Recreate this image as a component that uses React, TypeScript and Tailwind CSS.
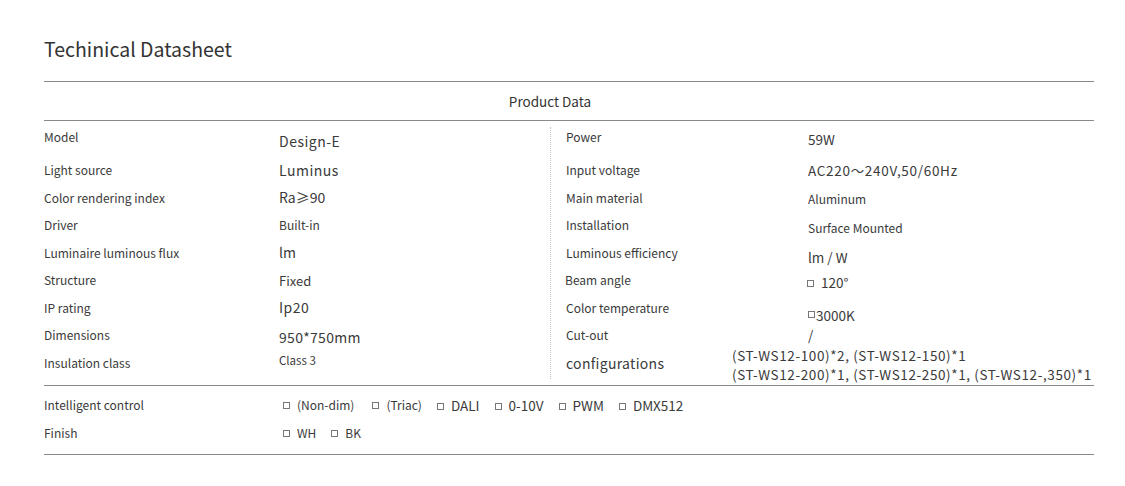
import React from "react";

const font = { fontFamily: '"Noto Sans CJK SC", "Noto Sans", sans-serif' };

function Box() {
  return <span className="inline-block w-[7px] h-[7px] border border-[#777] mr-[7px] translate-y-[-1px]" />;
}

type Row = { label: string; value: React.ReactNode; lcls?: string; vcls?: string };

const left: Row[] = [
  { label: "Model", value: "Design-E", vcls: "text-[14px] mt-[10px] tracking-[0.5px]" },
  { label: "Light source", value: "Luminus", vcls: "text-[14px] tracking-[0.5px]" },
  { label: "Color rendering index", value: "Ra≥90", vcls: "text-[14px]" },
  { label: "Driver", value: "Built-in", vcls: "text-[12px]" },
  { label: "Luminaire luminous flux", value: "lm", lcls: "text-[11.5px]", vcls: "text-[14px]" },
  { label: "Structure", value: "Fixed", vcls: "text-[13px]" },
  { label: "IP  rating", value: "Ip20", vcls: "text-[14px] tracking-[0.5px]" },
  { label: "Dimensions", value: "950*750mm", vcls: "text-[14px] mt-[4px] tracking-[0.3px]" },
  { label: "Insulation class", value: "Class 3", vcls: "text-[11.5px] mt-[-4px]" },
];

const right: Row[] = [
  { label: "Power", value: "59W", vcls: "text-[13.5px] mt-[4px]" },
  { label: "Input voltage", value: "AC220～240V,50/60Hz", vcls: "text-[13.5px] tracking-[0.7px]" },
  { label: "Main material", value: "Aluminum", vcls: "text-[12px] mt-[2px]" },
  { label: "Installation", value: "Surface Mounted", vcls: "text-[12px] mt-[6px]" },
  { label: "Luminous efficiency", value: "lm / W", vcls: "text-[13.5px] mt-[8px]" },
  { label: "Beam angle", value: (<span><Box />120°</span>), lcls: "ml-[-1px]", vcls: "text-[13.5px] mt-[4px]" },
  { label: "Color temperature", value: (<span className="inline-flex items-center"><span className="inline-block w-[7px] h-[7px] border border-[#777] mr-[1px]" />3000K</span>), vcls: "text-[13.5px] mt-[12px]" },
  { label: "Cut-out", value: "/", vcls: "text-[13.5px]" },
];

function RowView({ r, vw }: { r: Row; vw: string }) {
  return (
    <div className="h-[27.5px] flex items-center">
      <div className={`${vw} shrink-0 text-[12px] ${r.lcls ?? ""}`}>{r.label}</div>
      <div className={`${r.vcls ?? ""}`}>{r.value}</div>
    </div>
  );
}

export default function App() {
  return (
    <div className="w-[1125px] h-[486px] bg-white text-[#3a3a3a] pl-[44px] pt-[36px]" style={font}>
      <div className="w-[1050px]">
        <div className="text-[19.5px] text-[#333] leading-[26px] h-[26px]">Techinical Datasheet</div>
        <div className="mt-[19px] border-t border-[#8a8a8a]" />
        <div className="h-[38px] pr-[38px] flex items-center justify-center text-[13.5px] text-[#333]">Product Data</div>
        <div className="border-t border-[#8a8a8a]" />
        <div className="flex h-[264px]">
          <div className="w-[506px] pt-[2px]">
            <RowView r={left[0]} vw="w-[235px]" />
            <div className="mt-[6px]">
              {left.slice(1).map((r) => (
                <RowView key={r.label} r={r} vw="w-[235px]" />
              ))}
            </div>
          </div>
          <div className="border-l border-dotted border-[#c4c4c4] my-[6px]" />
          <div className="flex-1 pl-[15px] pt-[2px]">
            <RowView r={right[0]} vw="w-[242px]" />
            <div className="mt-[6px]">
              {right.slice(1).map((r) => (
                <RowView key={r.label} r={r} vw="w-[242px]" />
              ))}
              <div className="h-[27.5px] flex items-center">
                <div className="w-[166px] shrink-0 text-[14px] tracking-[0.3px] mt-[2px]">configurations</div>
                <div className="text-[13.5px] tracking-[0.6px] leading-[19px] mt-[4px] whitespace-nowrap">
                  <div>(ST-WS12-100)*2, (ST-WS12-150)*1</div>
                  <div>(ST-WS12-200)*1, (ST-WS12-250)*1, (ST-WS12-,350)*1</div>
                </div>
              </div>
            </div>
          </div>
        </div>
        <div className="border-t border-[#8a8a8a]" />
        <div className="pt-[5px]">
          <div className="h-[28px] flex items-center">
            <div className="w-[239px] shrink-0 text-[12px]">Intelligent control</div>
            <div className="flex items-center gap-[15px]">
              <span className="text-[12px]"><Box />(Non-dim)</span>
              <span className="text-[12px] ml-[3px]"><Box />(Triac)</span>
              <span className="text-[13.5px]"><Box />DALI</span>
              <span className="text-[13.5px]"><Box />0-10V</span>
              <span className="text-[13.5px]"><Box />PWM</span>
              <span className="text-[13.5px]"><Box />DMX512</span>
            </div>
          </div>
          <div className="h-[28px] flex items-center">
            <div className="w-[239px] shrink-0 text-[12px]">Finish</div>
            <div className="flex items-center gap-[15px] text-[12px]">
              <span><Box />WH</span>
              <span><Box />BK</span>
            </div>
          </div>
        </div>
        <div className="mt-[7px] border-t border-[#8a8a8a]" />
      </div>
    </div>
  );
}
